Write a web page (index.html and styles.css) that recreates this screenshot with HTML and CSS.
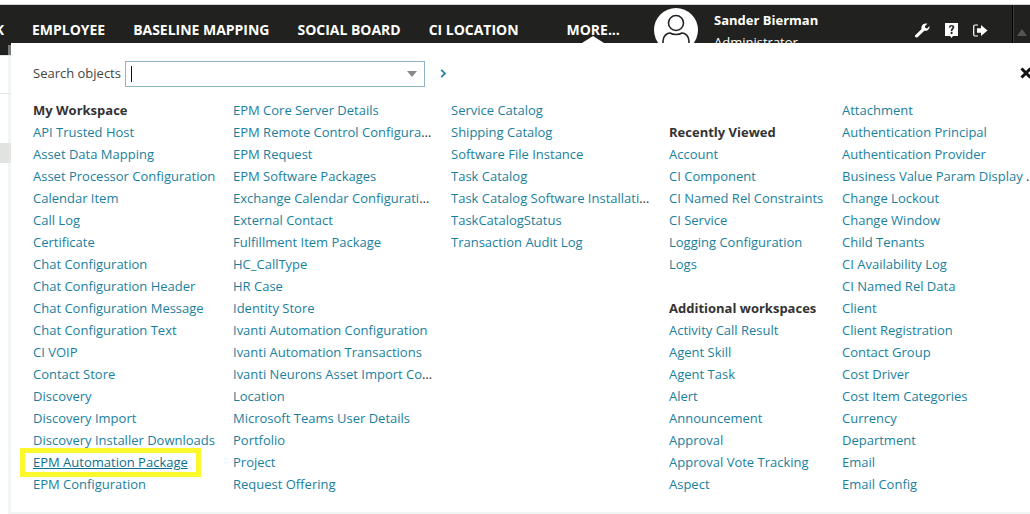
FILE: index.html
```html
<!DOCTYPE html>
<html lang="en">
<head>
<meta charset="utf-8">
<title>Objects menu</title>
<link rel="stylesheet" href="styles.css">
</head>
<body>
<div class="topline"></div>
<header class="topbar">
  <nav class="nav">
    <a class="nav-cut">K</a>
    <a class="nav-item">Employee</a>
    <a class="nav-item">Baseline Mapping</a>
    <a class="nav-item">Social Board</a>
    <a class="nav-item">CI Location</a>
    <a class="nav-item nav-more">More...</a>
  </nav>
  <div class="avatar">
    <svg width="44" height="44" viewBox="0 0 44 44" fill="none" stroke="#222" stroke-width="1.6">
      <circle cx="22" cy="15" r="7.5"/>
      <path d="M9 44 V33 C9 28 13 25 16 25 C19 27 25 27 28 25 C31 25 35 28 35 33 V44"/>
    </svg>
  </div>
  <div class="user">
    <div class="user-name">Sander Bierman</div>
    <div class="user-role">Administrator</div>
  </div>
  <div class="tools">
    <svg width="16" height="16" viewBox="0 0 16 16"><path fill="#fff" d="M1 13.6 L7.6 7 C6.9 4.6 8.4 1.6 11.6 1.4 C12.3 1.4 12.9 1.5 13.4 1.8 L10.8 4.2 L11.4 5.9 L13.2 6.4 L15.5 3.9 C15.9 6.6 13.7 9.4 10.3 8.7 L3.6 15.2 C2.6 16 0.2 15 1 13.6 Z"/></svg>
    <svg width="13" height="15" viewBox="0 0 13 15"><path fill="#fff" fill-rule="evenodd" d="M0 0 H13 V13 H8 L6.5 15 L5 13 H0 Z M3.8 4.6 H5.6 C5.7 3.7 6 3.3 6.6 3.3 C7.2 3.3 7.5 3.7 7.5 4.2 C7.5 5.2 5.8 5.6 5.8 7.6 V8.2 H7.4 V7.8 C7.4 6.6 9.3 6 9.3 4.1 C9.3 2.7 8.2 1.9 6.6 1.9 C4.9 1.9 3.9 2.9 3.8 4.6 Z M5.7 9 H7.5 V10.9 H5.7 Z"/></svg>
    <svg width="15" height="13" viewBox="0 0 15 13"><path fill="none" stroke="#fff" stroke-width="1.2" d="M5 1 H2 C1.2 1 .7 1.5 .7 2.2 V10.8 C.7 11.5 1.2 12 2 12 H5"/><path fill="#fff" d="M4 4.2 H8 V1 L14.5 6.5 L8 12 V8.8 H4 Z"/></svg>
  </div>
  <div class="collapse"><span class="collapse-arrow"></span></div>
</header>
<main class="page">
  <div class="page-row"></div>
  <div class="page-row-active"></div>
</main>
<section class="panel">
  <span class="panel-notch"></span>
  <div class="search">
    <label class="search-label">Search objects</label>
    <div class="search-box"><span class="caret"></span><span class="drop"></span></div>
    <svg class="go" width="7" height="9" viewBox="0 0 7 9"><path fill="none" stroke="#2a84a4" stroke-width="1.8" d="M1.2 .8 L5 4.5 L1.2 8.2"/></svg>
    <svg class="close" width="12" height="12" viewBox="0 0 12 12"><path stroke="#111" stroke-width="3" d="M1.5 1.5 L10.5 10.5 M10.5 1.5 L1.5 10.5"/></svg>
  </div>
  <div class="columns">
    <ul class="col col-1">
      <li class="head">My Workspace</li>
      <li><a>API Trusted Host</a></li>
      <li><a>Asset Data Mapping</a></li>
      <li><a>Asset Processor Configuration</a></li>
      <li><a>Calendar Item</a></li>
      <li><a>Call Log</a></li>
      <li><a>Certificate</a></li>
      <li><a>Chat Configuration</a></li>
      <li><a>Chat Configuration Header</a></li>
      <li><a>Chat Configuration Message</a></li>
      <li><a>Chat Configuration Text</a></li>
      <li><a>CI VOIP</a></li>
      <li><a>Contact Store</a></li>
      <li><a>Discovery</a></li>
      <li><a>Discovery Import</a></li>
      <li><a>Discovery Installer Downloads</a></li>
      <li class="marked-row"><a class="marked">EPM Automation Package</a></li>
      <li><a>EPM Configuration</a></li>
    </ul>
    <ul class="col col-2">
      <li><a>EPM Core Server Details</a></li>
      <li><a>EPM Remote Control Configuration</a></li>
      <li><a>EPM Request</a></li>
      <li><a>EPM Software Packages</a></li>
      <li><a>Exchange Calendar Configuration</a></li>
      <li><a>External Contact</a></li>
      <li><a>Fulfillment Item Package</a></li>
      <li><a>HC_CallType</a></li>
      <li><a>HR Case</a></li>
      <li><a>Identity Store</a></li>
      <li><a>Ivanti Automation Configuration</a></li>
      <li><a>Ivanti Automation Transactions</a></li>
      <li><a>Ivanti Neurons Asset Import Configuration</a></li>
      <li><a>Location</a></li>
      <li><a>Microsoft Teams User Details</a></li>
      <li><a>Portfolio</a></li>
      <li><a>Project</a></li>
      <li><a>Request Offering</a></li>
    </ul>
    <ul class="col col-3">
      <li><a>Service Catalog</a></li>
      <li><a>Shipping Catalog</a></li>
      <li><a>Software File Instance</a></li>
      <li><a>Task Catalog</a></li>
      <li><a>Task Catalog Software Installation</a></li>
      <li><a>TaskCatalogStatus</a></li>
      <li><a>Transaction Audit Log</a></li>
    </ul>
    <ul class="col col-4">
      <li class="spacer"></li>
      <li class="head">Recently Viewed</li>
      <li><a>Account</a></li>
      <li><a>CI Component</a></li>
      <li><a>CI Named Rel Constraints</a></li>
      <li><a>CI Service</a></li>
      <li><a>Logging Configuration</a></li>
      <li><a>Logs</a></li>
      <li class="spacer"></li>
      <li class="head">Additional workspaces</li>
      <li><a>Activity Call Result</a></li>
      <li><a>Agent Skill</a></li>
      <li><a>Agent Task</a></li>
      <li><a>Alert</a></li>
      <li><a>Announcement</a></li>
      <li><a>Approval</a></li>
      <li><a>Approval Vote Tracking</a></li>
      <li><a>Aspect</a></li>
    </ul>
    <ul class="col col-5">
      <li><a>Attachment</a></li>
      <li><a>Authentication Principal</a></li>
      <li><a>Authentication Provider</a></li>
      <li><a>Business Value Param Display Name</a></li>
      <li><a>Change Lockout</a></li>
      <li><a>Change Window</a></li>
      <li><a>Child Tenants</a></li>
      <li><a>CI Availability Log</a></li>
      <li><a>CI Named Rel Data</a></li>
      <li><a>Client</a></li>
      <li><a>Client Registration</a></li>
      <li><a>Contact Group</a></li>
      <li><a>Cost Driver</a></li>
      <li><a>Cost Item Categories</a></li>
      <li><a>Currency</a></li>
      <li><a>Department</a></li>
      <li><a>Email</a></li>
      <li><a>Email Config</a></li>
    </ul>
  </div>
</section>
</body>
</html>
```
FILE: styles.css
```css
* { box-sizing: border-box; }
html, body { margin: 0; padding: 0; height: 514px; overflow: hidden; background: #fff; }
body { font-family: "Open Sans", sans-serif; font-size: 13px; color: #333; }
ul { margin: 0; padding: 0; list-style: none; }

.topline { height: 5px; background: #fff; border-bottom: 1px solid #d4d4d4; }

.topbar { height: 50px; background: #21221f; display: flex; align-items: flex-start; color: #fff; overflow: hidden; }
.nav { display: flex; width: 654px; padding-top: 15px; overflow: hidden; font-weight: 700; font-size: 14px; line-height: 20px; letter-spacing: -0.02px; text-transform: uppercase; white-space: nowrap; }
.nav-cut { width: 4px; display: flex; justify-content: flex-end; flex: none; }
.nav-item { margin-left: 28px; }
.nav-more { margin-left: 48px; }
.avatar { flex: none; width: 44px; height: 44px; margin-top: 3px; border-radius: 50%; background: #fff; overflow: hidden; }
.user { margin-left: 16px; padding-top: 4px; width: 200px; flex: none; line-height: 22px; }
.user-name { font-weight: 700; font-size: 13px; }
.user-role { font-size: 13px; margin-top: 0; }
.tools { display: flex; align-items: center; gap: 15px; padding-top: 17px; width: 98px; flex: none; }
.collapse { flex: none; width: 18px; height: 50px; border-left: 1px solid #000; padding: 24px 0 0 4px; box-shadow: inset 1px 0 0 #3c3d3a; }
.collapse-arrow { display: block; width: 0; height: 0; border-left: 5px solid transparent; border-right: 5px solid transparent; border-bottom: 7px solid #555; }

.page { border-top: 1px solid #e4e4e4; }
.page-row { height: 38px; border-bottom: 1px solid #e4e4e4; }
.page-row-active { height: 20px; margin-top: 49px; background: #e2e3e1; }

.panel { position: absolute; left: 11px; top: 43px; right: -60px; height: 469px; background: #fff; box-shadow: -3px 2px 0 rgba(222, 234, 230, 0.45); padding: 18px 0 0 22px; }
.panel-notch { position: absolute; left: 571px; top: -7px; width: 0; height: 0; border-left: 11px solid transparent; border-right: 11px solid transparent; border-bottom: 7px solid #fff; }

.search { display: flex; align-items: center; height: 25px; position: relative; }
.search-label { width: 92px; line-height: 25px; color: #444; }
.search-box { width: 300px; height: 26px; border: 1px solid #8db4c6; display: flex; align-items: center; justify-content: space-between; padding: 0 7px 0 5px; }
.caret { width: 1px; height: 16px; background: #111; }
.drop { width: 0; height: 0; border-left: 5px solid transparent; border-right: 5px solid transparent; border-top: 6px solid #8a8a8a; }
.go { margin-left: 15px; }
.close { position: absolute; left: 987px; top: 6px; }

.columns { display: flex; margin-top: 13px; line-height: 22px; }
.col { flex: none; }
.col-1 { width: 200px; }
.col-2 { width: 218px; }
.col-3 { width: 218px; }
.col-4 { width: 173px; }
.col-5 { width: 200px; }
.col li { height: 22px; white-space: nowrap; overflow: hidden; text-overflow: ellipsis; }
.col-2 li { width: 201px; }
.col-3 li { width: 199px; }
.col-5 li { width: 197px; }
.col a { color: #1a7f9e; }
.col .head { font-weight: 700; color: #333; }
.col .marked { color: #0d6f8f; text-decoration: underline; }
.col-1 .marked-row { overflow: visible; position: relative; }
.marked-row::before { content: ""; box-sizing: border-box; position: absolute; left: -13px; top: -3px; width: 181px; height: 29px; border: 5px solid #fbf82c; pointer-events: none; }
```
